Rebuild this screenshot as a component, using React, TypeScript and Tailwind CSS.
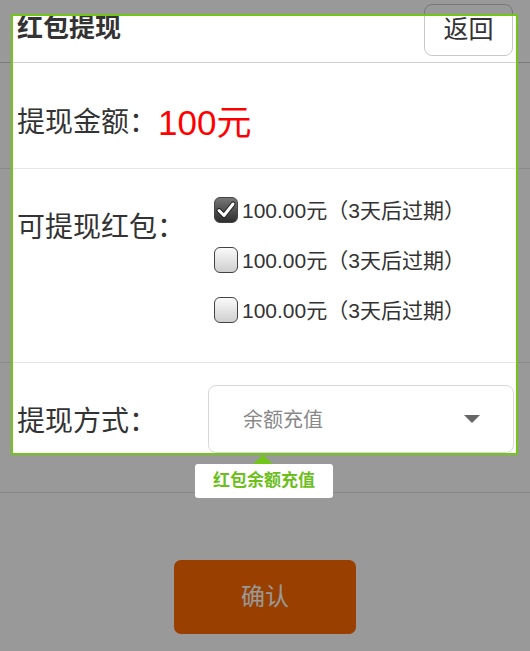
import React from "react";

const font = { fontFamily: '"Liberation Sans", "Noto Sans CJK SC", sans-serif' };

function Checkbox({ checked }: { checked?: boolean }) {
  return (
    <span
      className={
        "relative flex h-[26px] w-[24px] shrink-0 items-center justify-center rounded-[6px] border-[1.5px] border-[#444] " +
        (checked
          ? "bg-gradient-to-b from-[#777] to-[#2e2e2e]"
          : "bg-gradient-to-b from-[#fafafa] to-[#cfcfcf]")
      }
    >
      {checked && (
        <svg width="20" height="18" viewBox="0 0 20 18">
          <path
            d="M3 9.5 L8 14.5 L17 3"
            fill="none"
            stroke="#222"
            strokeWidth="5"
            strokeLinecap="round"
            strokeLinejoin="round"
          />
          <path
            d="M3 9.5 L8 14.5 L17 3"
            fill="none"
            stroke="#fff"
            strokeWidth="3"
            strokeLinecap="round"
            strokeLinejoin="round"
          />
        </svg>
      )}
    </span>
  );
}

const packets = [true, false, false];

export default function App() {
  return (
    <div className="relative min-h-[651px] w-[530px] overflow-hidden bg-white text-[#333]" style={font}>
      {/* Header */}
      <div className="flex h-[63px] items-start justify-between border-b border-[#cfcfcf] px-[17px] pt-[4px]">
        <h1 className="mt-[6px] text-[26px] font-bold leading-[36px] text-[#333]">红包提现</h1>
        <button className="h-[52px] w-[89px] rounded-[8px] border border-[#c8c8c8] bg-white text-[25px] text-[#333]">
          返回
        </button>
      </div>

      {/* Amount */}
      <div className="flex h-[106px] items-center border-b border-[#e6e6e6] pl-[17px] pt-[14px]">
        <span className="text-[28px] leading-none">提现金额：</span>
        <span className="ml-px text-[35px] leading-none text-[#ff0000]">100元</span>
      </div>

      {/* Packets */}
      <div className="flex h-[194px] border-b border-[#e6e6e6] pl-[17px]">
        <span className="mt-[42px] w-[197px] text-[28px] leading-[34px]">可提现红包：</span>
        <div className="flex flex-col pt-[16px]">
          {packets.map((checked, i) => (
            <label key={i} className="flex h-[50px] items-center gap-[4px]">
              <Checkbox checked={checked} />
              <span className="text-[21px] leading-none">100.00元（3天后过期）</span>
            </label>
          ))}
        </div>
      </div>

      {/* Method */}
      <div className="flex items-center border-b border-[#e0e0e0] pb-[39px] pl-[17px] pr-[16px] pt-[22px]">
        <span className="mt-[6px] w-[191px] text-[28px] leading-none">提现方式：</span>
        <div className="flex h-[68px] flex-1 items-center justify-between rounded-[8px] border border-[#d8d8d8] pl-[34px] pr-[33px]">
          <span className="mt-[2px] text-[20px] text-[#888]">余额充值</span>
          <span className="h-0 w-0 border-l-[8px] border-r-[8px] border-t-[8px] border-l-transparent border-r-transparent border-t-[#666]" />
        </div>
      </div>

      {/* Confirm */}
      <div className="flex justify-center pt-[67px]">
        <button className="h-[74px] w-[182px] rounded-[7px] bg-[#ff6a00] text-[24px] text-white">确认</button>
      </div>

      {/* Guide overlay */}
      <div className="absolute left-[11px] top-[14px] h-[441px] w-[507px] border-2 border-[#72c61a] shadow-[0_0_0_2000px_rgba(0,0,0,0.4)]" />
      <div className="absolute left-[195px] top-[455px] flex flex-col items-center">
        <span className="ml-[-2px] h-0 w-0 border-b-[9px] border-l-[10px] border-r-[10px] border-b-[#72c61a] border-l-transparent border-r-transparent" />
        <div className="flex h-[34px] w-[138px] items-center justify-center rounded-[3px] bg-white text-[17px] font-bold text-[#6cbf1a]">
          红包余额充值
        </div>
      </div>
    </div>
  );
}
